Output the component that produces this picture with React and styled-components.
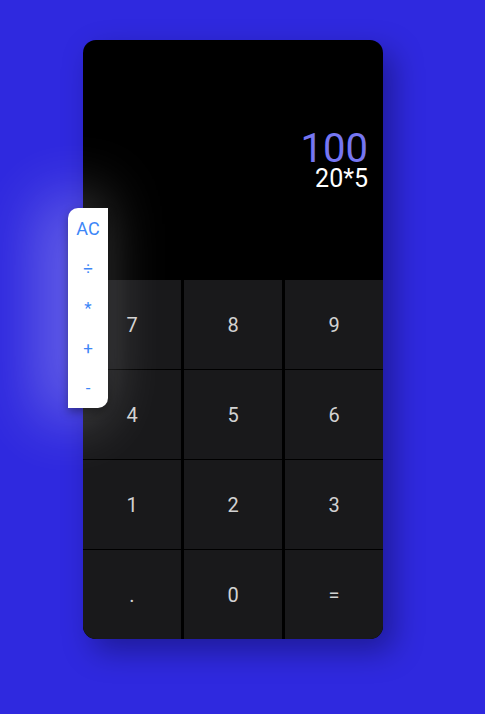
import React from "react";
import styled, { createGlobalStyle } from "styled-components";

const Global = createGlobalStyle`
  html, body { margin: 0; padding: 0; }
  body {
    background: #2f29df;
    font-family: Roboto, "Liberation Sans", sans-serif;
    width: 485px;
    height: 714px;
    overflow: hidden;
  }
`;

const Page = styled.div`
  padding: 40px 0 0 83px;
`;

const Calculator = styled.div`
  position: relative;
  width: 300px;
  height: 599px;
  background: #000;
  border-radius: 13px;
  box-shadow: 10px 12px 30px rgba(0, 0, 20, 0.35);
  display: flex;
  flex-direction: column;
`;

const Display = styled.div`
  height: 240px;
  box-sizing: border-box;
  padding: 91px 15px 0 0;
  display: flex;
  flex-direction: column;
  align-items: flex-end;
`;

const Result = styled.div`
  font-size: 40px;
  line-height: 36px;
  color: #7676f2;
`;

const Expression = styled.div`
  font-size: 25px;
  line-height: 22px;
  margin-top: 1px;
  color: #fff;
`;

const Keypad = styled.div`
  display: grid;
  grid-template-columns: repeat(3, 1fr);
  grid-template-rows: repeat(4, 89px);
  column-gap: 3px;
  row-gap: 1px;
  border-radius: 0 0 13px 13px;
  overflow: hidden;
`;

const Key = styled.button`
  border: none;
  margin: 0;
  padding: 0;
  background: #19191b;
  color: #d2d2d2;
  font-family: Roboto, "Liberation Sans", sans-serif;
  font-size: 20px;
  display: flex;
  align-items: center;
  justify-content: center;
`;

const Operators = styled.div`
  position: absolute;
  left: -15px;
  top: 168px;
  width: 40px;
  height: 200px;
  background: #fff;
  border-radius: 10px 0 10px 0;
  display: flex;
  flex-direction: column;
  z-index: 2;
  box-shadow: 0 4px 10px rgba(0, 0, 0, 0.35),
    -18px 0 60px 12px rgba(255, 255, 255, 0.28);
`;

const Op = styled.button`
  height: 40px;
  border: none;
  background: transparent;
  margin: 0;
  padding: 0;
  color: #3d86f7;
  font-family: Roboto, "Liberation Sans", sans-serif;
  font-size: ${(p) => (p.$small ? "17px" : "18px")};
  display: flex;
  align-items: center;
  justify-content: center;
`;

const keys = ["7", "8", "9", "4", "5", "6", "1", "2", "3", ".", "0", "="];
const ops = ["AC", "÷", "*", "+", "-"];

export default function App() {
  return (
    <>
      <Global />
      <Page>
        <Calculator>
          <Display>
            <Result>100</Result>
            <Expression>20*5</Expression>
          </Display>
          <Keypad>
            {keys.map((k) => (
              <Key key={k}>{k}</Key>
            ))}
          </Keypad>
          <Operators>
            {ops.map((o) => (
              <Op key={o} $small={o !== "AC"}>
                {o}
              </Op>
            ))}
          </Operators>
        </Calculator>
      </Page>
    </>
  );
}
